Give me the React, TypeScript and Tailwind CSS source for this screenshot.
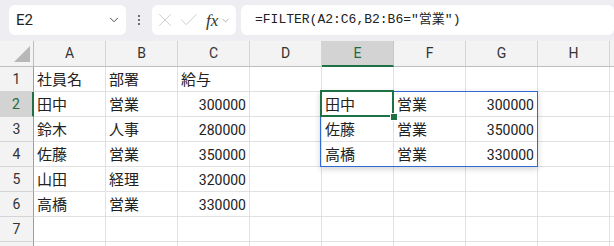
import { ChevronDown, X, Check } from "lucide-react";

const cols = ["A", "B", "C", "D", "E", "F", "G", "H", ""];

type Cell = { v: string; num?: boolean };

const data: Record<number, Record<string, Cell>> = {
  1: { A: { v: "社員名" }, B: { v: "部署" }, C: { v: "給与" } },
  2: {
    A: { v: "田中" },
    B: { v: "営業" },
    C: { v: "300000", num: true },
    E: { v: "田中" },
    F: { v: "営業" },
    G: { v: "300000", num: true },
  },
  3: {
    A: { v: "鈴木" },
    B: { v: "人事" },
    C: { v: "280000", num: true },
    E: { v: "佐藤" },
    F: { v: "営業" },
    G: { v: "350000", num: true },
  },
  4: {
    A: { v: "佐藤" },
    B: { v: "営業" },
    C: { v: "350000", num: true },
    E: { v: "高橋" },
    F: { v: "営業" },
    G: { v: "330000", num: true },
  },
  5: { A: { v: "山田" }, B: { v: "経理" }, C: { v: "320000", num: true } },
  6: { A: { v: "高橋" }, B: { v: "営業" }, C: { v: "330000", num: true } },
  7: {},
  8: {},
};

const font = { fontFamily: "Roboto, 'Noto Sans CJK JP', sans-serif" };

export default function App() {
  return (
    <div className="w-[614px] h-[246px] overflow-hidden bg-white text-[#222]" style={font}>
      {/* formula bar */}
      <div className="h-[41px] bg-[#eeedf1] flex items-start pt-[5px] pl-[9px] gap-[5px]">
        <div className="w-[117px] h-[30px] bg-white rounded-md flex items-center justify-between pl-[7px] pr-[5px]">
          <span className="text-[15px] text-[#222]">E2</span>
          <ChevronDown size={14} strokeWidth={1.6} className="text-[#444]" />
        </div>
        <div className="w-[16px] h-[30px] flex flex-col items-center justify-center gap-[2px]">
          <span className="w-[2px] h-[2px] bg-[#444] rounded-full" />
          <span className="w-[2px] h-[2px] bg-[#444] rounded-full" />
          <span className="w-[2px] h-[2px] bg-[#444] rounded-full" />
        </div>
        <div className="w-[84px] h-[30px] bg-white rounded-md flex items-center pl-[2px] pr-[3px]">
          <X size={22} strokeWidth={0.9} className="text-[#c4c4c4]" />
          <Check size={22} strokeWidth={0.9} className="text-[#c4c4c4] ml-[2px]" />
          <span
            className="ml-[6px] text-[17px] italic text-[#333] leading-none"
            style={{ fontFamily: "'Liberation Serif', serif" }}
          >
            fx
          </span>
          <ChevronDown size={11} strokeWidth={1.4} className="text-[#888] ml-[2px]" />
        </div>
        <div className="w-[373px] h-[30px] bg-white rounded-md flex items-center pl-[14px]">
          <span
            className="text-[13px] text-[#222] whitespace-pre"
            style={{ fontFamily: "'Liberation Mono', 'Noto Sans CJK JP', monospace" }}
          >
            =FILTER(A2:C6,B2:B6="営業")
          </span>
        </div>
      </div>

      {/* sheet */}
      <div className="relative">
        <div className="grid grid-cols-[34px_repeat(9,72px)] grid-rows-[26px_repeat(8,25px)]">
          {/* corner */}
          <div className="bg-[#f3f3f3] border-r border-b border-[#bdbdbd] relative">
            <div
              className="absolute right-[3px] bottom-[4px] w-[16px] h-[16px] bg-[#b8b8b8]"
              style={{ clipPath: "polygon(100% 0, 100% 100%, 0 100%)" }}
            />
          </div>
          {cols.map((c) => (
            <div
              key={c || "x"}
              className={`flex items-center justify-center text-[14px] border-r ${
                c === "E"
                  ? "bg-[#d3d3d3] text-[#1e6b41] border-b-2 border-b-[#1e7145] border-r-[#c8c8c8]"
                  : "bg-[#f3f3f3] text-[#333] border-b border-b-[#bdbdbd] border-r-[#d4d4d4]"
              }`}
            >
              {c}
            </div>
          ))}
          {[1, 2, 3, 4, 5, 6, 7, 8].map((r) => (
            <Row key={r} r={r} />
          ))}
        </div>

        {/* spill range */}
        <div className="absolute left-[320px] top-[50px] w-[218px] h-[76px] border border-[#2f6bd0] shadow-[0_2px_6px_rgba(0,0,0,0.18)] pointer-events-none" />
        {/* active cell */}
        <div className="absolute left-[320px] top-[49px] w-[74px] h-[27px] border-2 border-[#1e7145] pointer-events-none" />
        <div className="absolute left-[390px] top-[72px] w-[6px] h-[6px] bg-[#1e7145] border border-white box-content pointer-events-none" />
      </div>
    </div>
  );
}

function Row({ r }: { r: number }) {
  const sel = r === 2;
  return (
    <>
      <div
        className={`flex items-center justify-center text-[14px] border-b border-b-[#d4d4d4] ${
          sel
            ? "bg-[#d3d3d3] text-[#1e6b41] border-r-2 border-r-[#1e7145]"
            : "bg-[#f3f3f3] text-[#333] border-r border-r-[#9e9e9e]"
        }`}
      >
        {r < 8 ? r : ""}
      </div>
      {cols.map((c) => {
        const cell = data[r]?.[c];
        return (
          <div
            key={c || "x"}
            className={`border-r border-b border-[#e1e1e1] flex items-center pt-[2px] px-[3px] overflow-hidden whitespace-nowrap ${
              cell?.num ? "justify-end text-[14px]" : "justify-start text-[15px]"
            }`}
          >
            {cell?.v}
          </div>
        );
      })}
    </>
  );
}
